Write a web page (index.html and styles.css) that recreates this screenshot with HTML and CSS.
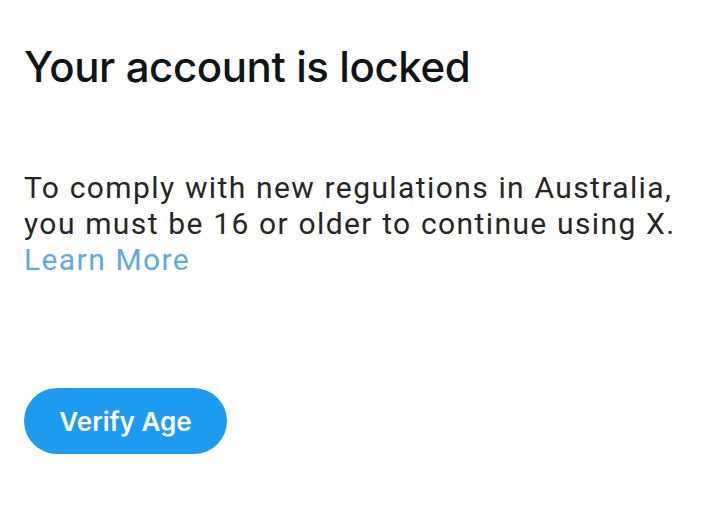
FILE: index.html
```html
<!DOCTYPE html>
<html>
<head>
<meta charset="utf-8">
<link rel="stylesheet" href="styles.css">
</head>
<body>
<main class="page">
  <h1 class="title">Your account is locked</h1>
  <p class="message">To comply with new regulations in Australia, you must be 16 or older to continue using X. <a class="link" href="#">Learn More</a></p>
  <button class="verify">Verify Age</button>
</main>
</body>
</html>
```
FILE: styles.css
```css
html, body {
  margin: 0;
  padding: 0;
  background: #ffffff;
}
.page {
  display: flex;
  flex-direction: column;
  align-items: flex-start;
  padding: 40px 24px 0 24px;
}
.title {
  margin: 0;
  font-family: Inter, "Noto Sans", sans-serif;
  font-weight: 500;
  font-size: 42px;
  line-height: 54px;
  color: #0f1419;
  letter-spacing: -0.4px;
}
.message {
  margin: 76px 0 0 0;
  width: 690px;
  font-family: Roboto, sans-serif;
  font-size: 30px;
  line-height: 36px;
  letter-spacing: 1.4px;
  word-spacing: 0.5px;
  color: #262626;
}
.link {
  display: block;
  color: #5faadf;
  text-decoration: none;
}
.verify {
  margin-top: 110px;
  width: 203px;
  height: 66px;
  border: none;
  border-radius: 33px;
  background: #1d9bf0;
  color: #ffffff;
  font-family: Inter, sans-serif;
  font-weight: 600;
  font-size: 26px;
  padding: 0;
}
```
